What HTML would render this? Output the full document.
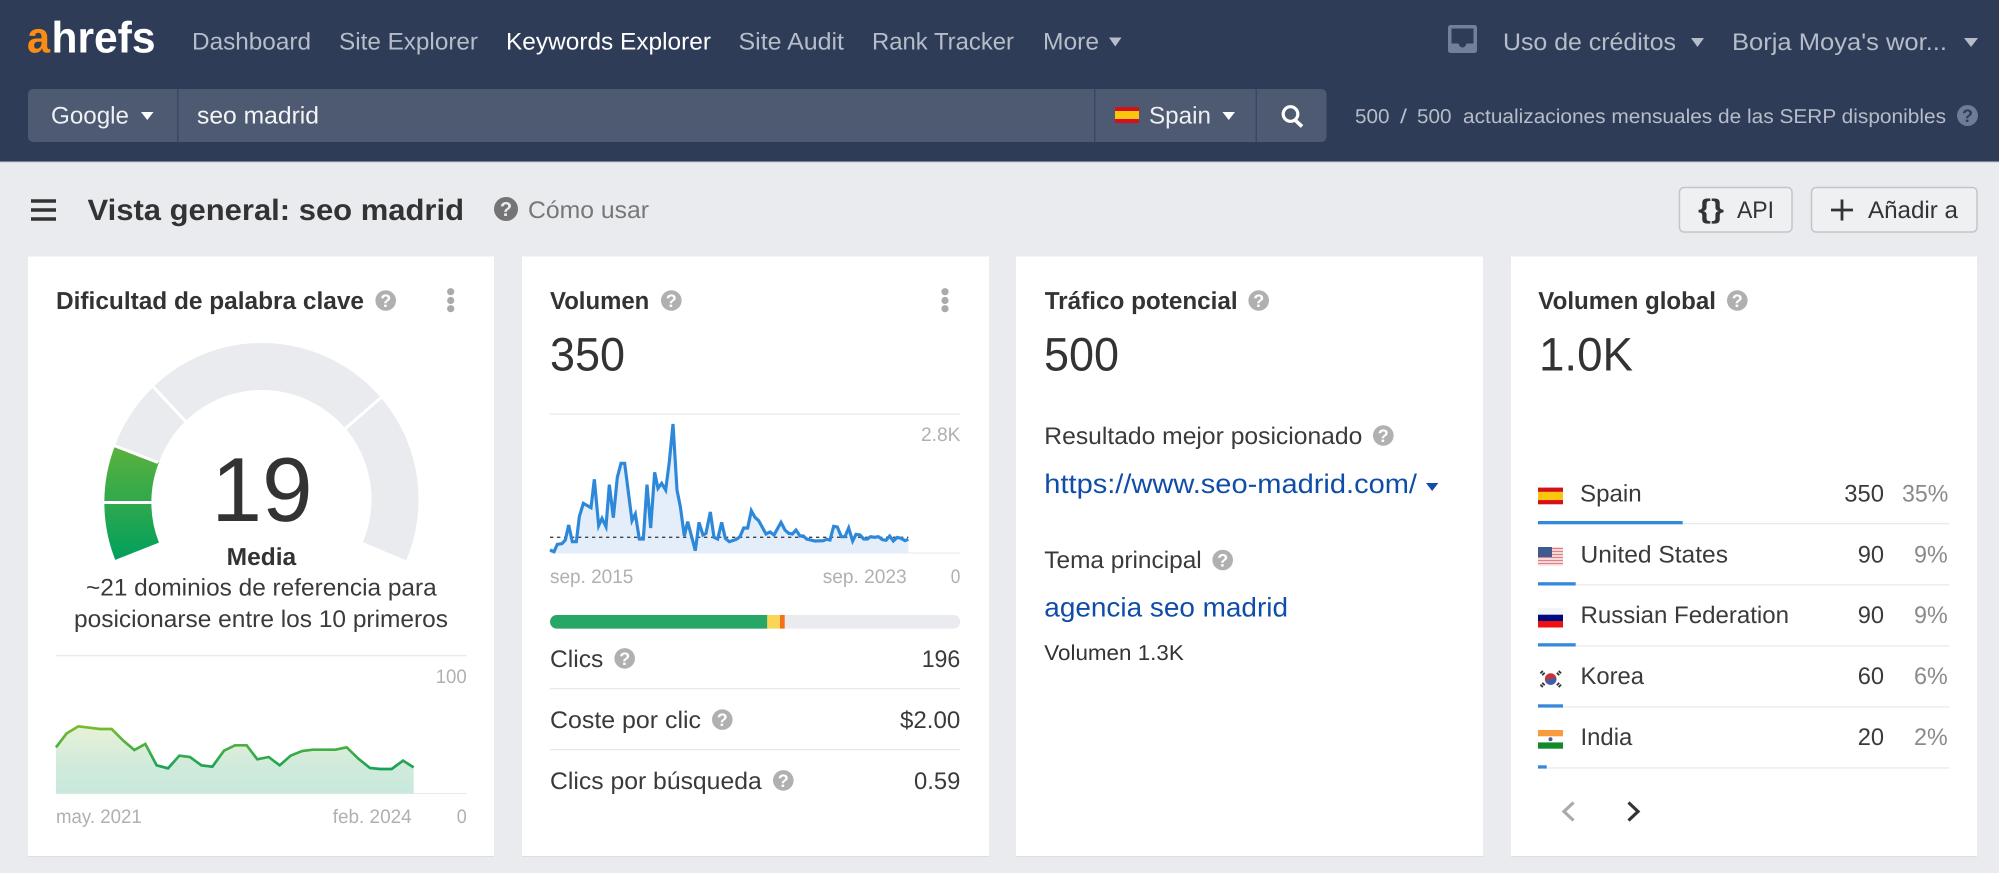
<!DOCTYPE html>
<html lang="es"><head><meta charset="utf-8"><title>Vista general: seo madrid</title>
<style>
html,body{margin:0;padding:0;background:#e9ebee;width:1999px;height:873px;overflow:hidden}
svg{display:block;filter:blur(.3px)}
text{font-family:"Liberation Sans",sans-serif;text-rendering:geometricPrecision;fill:#333}
.n{font-size:24px;fill:#b6bcc8}
.w{font-size:24px;fill:#fff}
.h{font-size:24.5px;font-weight:700;fill:#333}
.b{font-size:47px;fill:#333}
.s{font-size:19.5px;fill:#b0b0b0}
.r{font-size:24px;fill:#3a3a3a}
.p{font-size:24px;fill:#8a8a8a}
.q{font-size:18px;font-weight:700;fill:#fff;text-anchor:middle;transform:translateY(1px)}
.l{font-size:27px;fill:#0f4da8}
</style></head><body>
<svg width="1999" height="873" viewBox="0 0 1999 873" xmlns="http://www.w3.org/2000/svg">
<defs>
<linearGradient id="gg" gradientUnits="userSpaceOnUse" x1="0" y1="446" x2="0" y2="560"><stop offset="0" stop-color="#5cb13d"/><stop offset="1" stop-color="#00a05e"/></linearGradient>
<linearGradient id="ls" gradientUnits="userSpaceOnUse" x1="0" y1="195" x2="0" y2="330"><stop offset="0" stop-color="#7dbb2b"/><stop offset="1" stop-color="#14a15a"/></linearGradient>
<linearGradient id="lf" gradientUnits="userSpaceOnUse" x1="0" y1="195" x2="0" y2="400"><stop offset="0" stop-color="#e8f2d6"/><stop offset=".6" stop-color="#d0eadc"/><stop offset="1" stop-color="#c9e9dc"/></linearGradient>
</defs>
<rect width="1999" height="873" fill="#e9ebee"/>
<!-- header -->
<rect width="1999" height="162" fill="#2e3c58"/>
<rect y="161.500" width="1999" height="1" fill="#c4c8d0"/>
<text x="27" y="52.700" font-size="44" font-weight="700" style="fill:#fb8c14" textLength="23" lengthAdjust="spacingAndGlyphs">a</text>
<text x="51.500" y="52.700" font-size="44" font-weight="700" style="fill:#fff" textLength="104" lengthAdjust="spacingAndGlyphs">hrefs</text>
<text class="n" x="192" y="49.500" textLength="119" lengthAdjust="spacingAndGlyphs">Dashboard</text>
<text class="n" x="339" y="49.500" textLength="139" lengthAdjust="spacingAndGlyphs">Site Explorer</text>
<text class="w" x="506" y="49.500" textLength="205" lengthAdjust="spacingAndGlyphs">Keywords Explorer</text>
<text class="n" x="738.500" y="49.500" textLength="105.500" lengthAdjust="spacingAndGlyphs">Site Audit</text>
<text class="n" x="872" y="49.500" textLength="142" lengthAdjust="spacingAndGlyphs">Rank Tracker</text>
<text class="n" x="1043" y="49.500" textLength="56" lengthAdjust="spacingAndGlyphs">More</text>
<path d="M1109 37.500h12.500l-6.250 9z" fill="#b6bcc8"/>
<path fill-rule="evenodd" d="M1450.500 25h24a2.500 2.500 0 0 1 2.500 2.500v23a2.500 2.500 0 0 1-2.500 2.500h-24a2.500 2.500 0 0 1-2.500-2.500v-23a2.500 2.500 0 0 1 2.500-2.500zM1451.500 28.500v15h7c.7 2.600 2.300 4 4 4s3.300-1.400 4-4h7v-15z" fill="#72809a"/>
<text class="n" x="1503" y="50" textLength="173" lengthAdjust="spacingAndGlyphs">Uso de créditos</text>
<path d="M1691 38h13l-6.500 9z" fill="#b6bcc8"/>
<text class="n" x="1732" y="50" textLength="215" lengthAdjust="spacingAndGlyphs">Borja Moya's wor...</text>
<path d="M1964 38h14l-7 9z" fill="#b6bcc8"/>
<!-- search bar -->
<rect x="28" y="89" width="1298.500" height="53" rx="5" fill="#4e5a71"/>
<rect x="177" y="89" width="1.500" height="53" fill="#3a4863"/>
<rect x="1094" y="89" width="1.500" height="53" fill="#3a4863"/>
<rect x="1255.500" y="89" width="1.500" height="53" fill="#3a4863"/>
<text class="w" x="51" y="123.500" textLength="78" lengthAdjust="spacingAndGlyphs" style="fill:#eef0f3">Google</text>
<path d="M141 112h12.500l-6.250 8z" fill="#fff"/>
<text class="w" x="197" y="123.500" textLength="122" lengthAdjust="spacingAndGlyphs" style="fill:#f4f5f7">seo madrid</text>
<rect x="1115" y="107" width="24" height="16" fill="#d3101c"/><rect x="1115" y="111" width="24" height="8" fill="#fcc60f"/>
<text class="w" x="1149" y="123.500" textLength="62" lengthAdjust="spacingAndGlyphs" style="fill:#eef0f3">Spain</text>
<path d="M1222.500 112h12.500l-6.250 8z" fill="#fff"/>
<circle cx="1290.500" cy="114" r="7.300" fill="none" stroke="#fff" stroke-width="3.200"/>
<path d="M1295 120l7 6.500" stroke="#fff" stroke-width="3.600" fill="none"/>
<text x="1355" y="123" font-size="20" style="fill:#b6bcc8" textLength="34.500" lengthAdjust="spacingAndGlyphs">500</text>
<text x="1400" y="123" font-size="20" style="fill:#b6bcc8" textLength="7" lengthAdjust="spacingAndGlyphs">/</text>
<text x="1417" y="123" font-size="20" style="fill:#b6bcc8" textLength="34.500" lengthAdjust="spacingAndGlyphs">500</text>
<text x="1463" y="123" font-size="20" style="fill:#b6bcc8" textLength="483" lengthAdjust="spacingAndGlyphs">actualizaciones mensuales de las SERP disponibles</text>
<circle cx="1967.500" cy="115.500" r="10.500" fill="#6f7c95"/><text class="q" x="1967.500" y="121" style="fill:#2e3c58">?</text>
<!-- title row -->
<path d="M31 201h25M31 210h25M31 219h25" stroke="#333" stroke-width="3.500" fill="none"/>
<text x="87.500" y="220" font-size="29.500" font-weight="700" textLength="376.500" lengthAdjust="spacingAndGlyphs">Vista general: seo madrid</text>
<circle cx="506" cy="209" r="12" fill="#747474"/><text x="506" y="216" font-size="20" font-weight="700" style="fill:#e9ebee;text-anchor:middle">?</text>
<text x="528" y="218" font-size="24" style="fill:#777" textLength="121" lengthAdjust="spacingAndGlyphs">Cómo usar</text>
<rect x="1679.500" y="187.500" width="112.500" height="44.500" rx="4.500" fill="#eff0f2" stroke="#c2c5c9" stroke-width="1.500"/>
<text x="1698" y="218" font-size="27" font-weight="700" textLength="26" lengthAdjust="spacingAndGlyphs">{}</text>
<text x="1737" y="218" font-size="24" textLength="37" lengthAdjust="spacingAndGlyphs">API</text>
<rect x="1811.500" y="187.500" width="165.500" height="44.500" rx="4.500" fill="#eff0f2" stroke="#c2c5c9" stroke-width="1.500"/>
<path d="M1842 199.500v21M1831 210h22" stroke="#333" stroke-width="2.800" fill="none"/>
<text x="1868" y="218" font-size="24" textLength="90" lengthAdjust="spacingAndGlyphs">Añadir a</text>
<!-- cards -->
<rect x="28" y="256.500" width="466" height="599.500" fill="#fff"/>
<rect x="522" y="256.500" width="467" height="599.500" fill="#fff"/>
<rect x="1016" y="256.500" width="467" height="599.500" fill="#fff"/>
<rect x="1511" y="256.500" width="466" height="599.500" fill="#fff"/>
<rect x="28" y="856" width="466" height="1" fill="#dcdee1"/><rect x="522" y="856" width="467" height="1" fill="#dcdee1"/><rect x="1016" y="856" width="467" height="1" fill="#dcdee1"/><rect x="1511" y="856" width="466" height="1" fill="#dcdee1"/>
<!-- card 1 -->
<text class="h" x="56" y="309" textLength="308" lengthAdjust="spacingAndGlyphs">Dificultad de palabra clave</text>
<circle cx="385.700" cy="300.500" r="10.300" fill="#b0b0b0"/><text class="q" x="385.700" y="306">?</text>
<circle cx="450.700" cy="291.700" r="3.600" fill="#aaa"/><circle cx="450.700" cy="300.500" r="3.600" fill="#aaa"/><circle cx="450.700" cy="308.700" r="3.600" fill="#aaa"/>
<path d="M137.100 551.250A133 133 0 0 1 137.100 453.750" fill="none" stroke="url(#gg)" stroke-width="47"/>
<path d="M137.100 453.750A133 133 0 1 1 384.500 551.250" fill="none" stroke="#e9ebee" stroke-width="47"/>
<path d="M100 502.500H156M189.200 425.200L150.300 383.600M340.100 433.100L383.100 395.700M158 462.500L110 444" stroke="#fff" stroke-width="3" fill="none"/>
<text x="262" y="521" font-size="91" style="text-anchor:middle">19</text>
<text class="h" x="226.700" y="565" textLength="69.500" lengthAdjust="spacingAndGlyphs">Media</text>
<text class="r" x="86" y="595.500" textLength="350.700" lengthAdjust="spacingAndGlyphs">~21 dominios de referencia para</text>
<text class="r" x="74" y="627" textLength="374" lengthAdjust="spacingAndGlyphs">posicionarse entre los 10 primeros</text>
<rect x="56" y="655" width="410.700" height="1.300" fill="#e8e9eb"/>
<text class="s" x="435.700" y="683" textLength="31" lengthAdjust="spacingAndGlyphs">100</text>
<rect x="56" y="793" width="410.700" height="1" fill="#e8e9eb"/>
<g transform="translate(40 660) scale(.33333)">
<path d="M48 401V262L80 220L115 199L180 207L215 207L250 242L283 270L316 252L350 316L384 325L418 287L450 291L484 316L517 320L552 272L585 256L620 256L652 298L686 291L719 316L752 287L786 273L818 269L886 269L920 262L955 296L990 324L1020 327L1055 327L1089 302L1121 322V401H48Z" fill="url(#lf)"/>
<path d="M48 262L80 220L115 199L180 207L215 207L250 242L283 270L316 252L350 316L384 325L418 287L450 291L484 316L517 320L552 272L585 256L620 256L652 298L686 291L719 316L752 287L786 273L818 269L886 269L920 262L955 296L990 324L1020 327L1055 327L1089 302L1121 322" fill="none" stroke="url(#ls)" stroke-width="8"/>
</g>
<text class="s" x="56" y="823" textLength="85.700" lengthAdjust="spacingAndGlyphs">may. 2021</text>
<text class="s" x="332.700" y="823" textLength="79" lengthAdjust="spacingAndGlyphs">feb. 2024</text>
<text class="s" x="456.700" y="823" textLength="10" lengthAdjust="spacingAndGlyphs">0</text>
<!-- card 2 -->
<text class="h" x="550" y="309" textLength="99.300" lengthAdjust="spacingAndGlyphs">Volumen</text>
<circle cx="671.300" cy="300.500" r="10.300" fill="#b0b0b0"/><text class="q" x="671.300" y="306">?</text>
<circle cx="945" cy="291.700" r="3.600" fill="#aaa"/><circle cx="945" cy="300.500" r="3.600" fill="#aaa"/><circle cx="945" cy="308.700" r="3.600" fill="#aaa"/>
<text class="b" x="550" y="370.500" textLength="75" lengthAdjust="spacingAndGlyphs">350</text>
<rect x="550" y="413.500" width="410.300" height="1.300" fill="#e8e9eb"/>
<rect x="550" y="552.500" width="410.300" height="1" fill="#e8e9eb"/>
<g transform="translate(540 400) scale(.33333)">
<path d="M30 458V450L42 455L52 433L66 431L76 420L86 375L97 425L109 425L118 350L130 310L153 323L163 238L176 377L186 355L198 380L208 254L220 353L232 232L243 190L254 190L276 362L286 342L298 417L310 417L321 254L332 384L344 217L354 265L365 250L377 270L388 185L399 72L411 270L421 320L433 408L443 365L466 452L477 367L489 405L498 400L511 336L522 412L533 417L545 367L556 415L568 425L589 418L600 410L611 384L623 384L634 332L645 352L656 362L678 402L690 396L702 405L723 367L735 390L746 400L757 402L768 390L780 408L790 408L800 417L825 423L850 422L860 418L870 420L881 379L892 381L904 410L915 410L926 384L938 423L948 403L960 405L971 417L982 417L992 410L1004 412L1015 410L1027 419L1038 421L1049 408L1060 423L1072 412L1083 415L1095 422L1105 418V460H30Z" fill="#e3eefa"/>
<path d="M30 412H1105" stroke="#444" stroke-width="4" stroke-dasharray="10 11" fill="none"/>
<path d="M30 450L42 455L52 433L66 431L76 420L86 375L97 425L109 425L118 350L130 310L153 323L163 238L176 377L186 355L198 380L208 254L220 353L232 232L243 190L254 190L276 362L286 342L298 417L310 417L321 254L332 384L344 217L354 265L365 250L377 270L388 185L399 72L411 270L421 320L433 408L443 365L466 452L477 367L489 405L498 400L511 336L522 412L533 417L545 367L556 415L568 425L589 418L600 410L611 384L623 384L634 332L645 352L656 362L678 402L690 396L702 405L723 367L735 390L746 400L757 402L768 390L780 408L790 408L800 417L825 423L850 422L860 418L870 420L881 379L892 381L904 410L915 410L926 384L938 423L948 403L960 405L971 417L982 417L992 410L1004 412L1015 410L1027 419L1038 421L1049 408L1060 423L1072 412L1083 415L1095 422L1105 418" fill="none" stroke="#2e88da" stroke-width="9.500"/>
</g>
<text class="s" x="921" y="441" textLength="39.500" lengthAdjust="spacingAndGlyphs">2.8K</text>
<text class="s" x="550" y="583" textLength="83.300" lengthAdjust="spacingAndGlyphs">sep. 2015</text>
<text class="s" x="822.700" y="583" textLength="84" lengthAdjust="spacingAndGlyphs">sep. 2023</text>
<text class="s" x="950.700" y="583" textLength="9.600" lengthAdjust="spacingAndGlyphs">0</text>
<rect x="550" y="615" width="410.300" height="13.600" rx="6.800" fill="#e9ebee"/>
<path d="M767.300 615H556.800a6.800 6.800 0 0 0 0 13.600H767.300z" fill="#27a765"/>
<rect x="767.300" y="615" width="12.700" height="13.600" fill="#fbd656"/>
<rect x="780" y="615" width="4.700" height="13.600" fill="#f5701a"/>
<text class="r" x="550" y="667" textLength="53.300" lengthAdjust="spacingAndGlyphs">Clics</text>
<circle cx="624.700" cy="658.400" r="10.300" fill="#b0b0b0"/><text class="q" x="624.700" y="664">?</text>
<text class="r" x="921.700" y="667" textLength="38.600" lengthAdjust="spacingAndGlyphs">196</text>
<rect x="550" y="688" width="410.300" height="1.300" fill="#e8e9eb"/>
<text class="r" x="550" y="728" textLength="151" lengthAdjust="spacingAndGlyphs">Coste por clic</text>
<circle cx="722.300" cy="719.600" r="10.300" fill="#b0b0b0"/><text class="q" x="722.300" y="725">?</text>
<text class="r" x="900" y="728" textLength="60.300" lengthAdjust="spacingAndGlyphs">$2.00</text>
<rect x="550" y="749" width="410.300" height="1.300" fill="#e8e9eb"/>
<text class="r" x="550" y="788.800" textLength="211.700" lengthAdjust="spacingAndGlyphs">Clics por búsqueda</text>
<circle cx="783.300" cy="780.400" r="10.300" fill="#b0b0b0"/><text class="q" x="783.300" y="786">?</text>
<text class="r" x="914" y="788.800" textLength="46.300" lengthAdjust="spacingAndGlyphs">0.59</text>
<!-- card 3 -->
<text class="h" x="1044.700" y="309" textLength="193" lengthAdjust="spacingAndGlyphs">Tráfico potencial</text>
<circle cx="1258.700" cy="300.500" r="10.300" fill="#b0b0b0"/><text class="q" x="1258.700" y="306">?</text>
<text class="b" x="1044" y="370.500" textLength="75" lengthAdjust="spacingAndGlyphs">500</text>
<text class="r" x="1044.300" y="444" textLength="318" lengthAdjust="spacingAndGlyphs">Resultado mejor posicionado</text>
<circle cx="1383.300" cy="435.500" r="10.300" fill="#b0b0b0"/><text class="q" x="1383.300" y="441">?</text>
<text class="l" x="1044.300" y="492.800" textLength="372.700" lengthAdjust="spacingAndGlyphs">https://www.seo-madrid.com/</text>
<path d="M1426 483h12.300l-6.150 8z" fill="#0f4da8"/>
<text class="r" x="1044.300" y="568" textLength="157.400" lengthAdjust="spacingAndGlyphs">Tema principal</text>
<circle cx="1222.700" cy="560" r="10.300" fill="#b0b0b0"/><text class="q" x="1222.700" y="565.500">?</text>
<text class="l" x="1044.300" y="616.700" textLength="243.700" lengthAdjust="spacingAndGlyphs">agencia seo madrid</text>
<text x="1044.300" y="660" font-size="21.500" textLength="139.500" lengthAdjust="spacingAndGlyphs">Volumen 1.3K</text>
<!-- card 4 -->
<text class="h" x="1538.300" y="309" textLength="177.700" lengthAdjust="spacingAndGlyphs">Volumen global</text>
<circle cx="1737.300" cy="300.500" r="10.300" fill="#b0b0b0"/><text class="q" x="1737.300" y="306">?</text>
<text class="b" x="1539" y="370.500" textLength="94" lengthAdjust="spacingAndGlyphs">1.0K</text>
<!-- row lines -->
<rect x="1538" y="523" width="411.300" height="1.300" fill="#e8e9eb"/>
<rect x="1538" y="584.200" width="411.300" height="1.300" fill="#e8e9eb"/>
<rect x="1538" y="645.200" width="411.300" height="1.300" fill="#e8e9eb"/>
<rect x="1538" y="706.300" width="411.300" height="1.300" fill="#e8e9eb"/>
<rect x="1538" y="767.300" width="411.300" height="1.300" fill="#e8e9eb"/>
<rect x="1538" y="521" width="144.700" height="3.300" fill="#3589dc"/>
<rect x="1538" y="582.200" width="37.700" height="3.300" fill="#3589dc"/>
<rect x="1538" y="643.200" width="37.700" height="3.300" fill="#3589dc"/>
<rect x="1538" y="704.300" width="25" height="3.300" fill="#3589dc"/>
<rect x="1538" y="765.300" width="8.700" height="3.300" fill="#3589dc"/>
<!-- Spain -->
<rect x="1538" y="487.600" width="25" height="16.700" fill="#d3101c"/><rect x="1538" y="491.800" width="25" height="8.300" fill="#fcc60f"/>
<text class="r" x="1580" y="501.500" textLength="61.700" lengthAdjust="spacingAndGlyphs">Spain</text>
<text class="r" x="1844.300" y="501.500" textLength="39.700" lengthAdjust="spacingAndGlyphs">350</text>
<text class="p" x="1902" y="501.500" textLength="46.300" lengthAdjust="spacingAndGlyphs">35%</text>
<!-- US -->
<rect x="1538" y="547" width="25" height="19" fill="#f9e4e4"/>
<path d="M1538 548.500h25M1538 551.500h25M1538 554.500h25M1538 557.500h25M1538 560.500h25M1538 563.500h25" stroke="#dd8088" stroke-width="1.300" fill="none"/>
<rect x="1538" y="547" width="14" height="10" fill="#3f5a8c"/>
<text class="r" x="1580.500" y="562.300" textLength="147.500" lengthAdjust="spacingAndGlyphs">United States</text>
<text class="r" x="1857.700" y="562.300" textLength="26.300" lengthAdjust="spacingAndGlyphs">90</text>
<text class="p" x="1914" y="562.300" textLength="33.700" lengthAdjust="spacingAndGlyphs">9%</text>
<!-- Russia -->
<rect x="1538" y="608" width="25" height="7" fill="#f4f5f8"/>
<rect x="1538" y="614.700" width="25" height="6.500" fill="#000a80"/><rect x="1538" y="621" width="25" height="6.500" fill="#f01010"/>
<text class="r" x="1580.500" y="623.200" textLength="208.500" lengthAdjust="spacingAndGlyphs">Russian Federation</text>
<text class="r" x="1857.700" y="623.200" textLength="26.300" lengthAdjust="spacingAndGlyphs">90</text>
<text class="p" x="1914" y="623.200" textLength="33.700" lengthAdjust="spacingAndGlyphs">9%</text>
<!-- Korea -->
<circle cx="1550.700" cy="679" r="5.800" fill="#c8323c"/>
<path d="M1544.900 679a5.800 5.800 0 0 0 11.600 0c-1.600-1.600-3.300-1.100-5.800 0s-4.200 1.100-5.800 0z" fill="#3d5ea8"/>
<path d="M1541 671.500l3.500 3.500M1560.500 671.500l-3.500 3.500M1541 686.500l3.500-3.500M1560.500 686.500l-3.500-3.500" stroke="#333" stroke-width="3.400" stroke-dasharray="1.800 .8" fill="none"/>
<text class="r" x="1580.500" y="684.200" textLength="63.500" lengthAdjust="spacingAndGlyphs">Korea</text>
<text class="r" x="1857.700" y="684.200" textLength="26.300" lengthAdjust="spacingAndGlyphs">60</text>
<text class="p" x="1914" y="684.200" textLength="33.700" lengthAdjust="spacingAndGlyphs">6%</text>
<!-- India -->
<rect x="1538" y="730" width="25" height="6.300" fill="#fb9a3c"/><rect x="1538" y="742.400" width="25" height="6.300" fill="#138a2a"/>
<circle cx="1550.500" cy="739.300" r="2" fill="#4a5f90"/>
<text class="r" x="1580.500" y="745" textLength="51.800" lengthAdjust="spacingAndGlyphs">India</text>
<text class="r" x="1857.700" y="745" textLength="26.300" lengthAdjust="spacingAndGlyphs">20</text>
<text class="p" x="1914" y="745" textLength="33.700" lengthAdjust="spacingAndGlyphs">2%</text>
<!-- arrows -->
<path d="M1573.500 802.500L1564 811.500L1573.500 820.500" fill="none" stroke="#aaa" stroke-width="3.200"/>
<path d="M1628.500 802.500L1638 811.500L1628.500 820.500" fill="none" stroke="#333" stroke-width="3.200"/>
</svg>
</body></html>
